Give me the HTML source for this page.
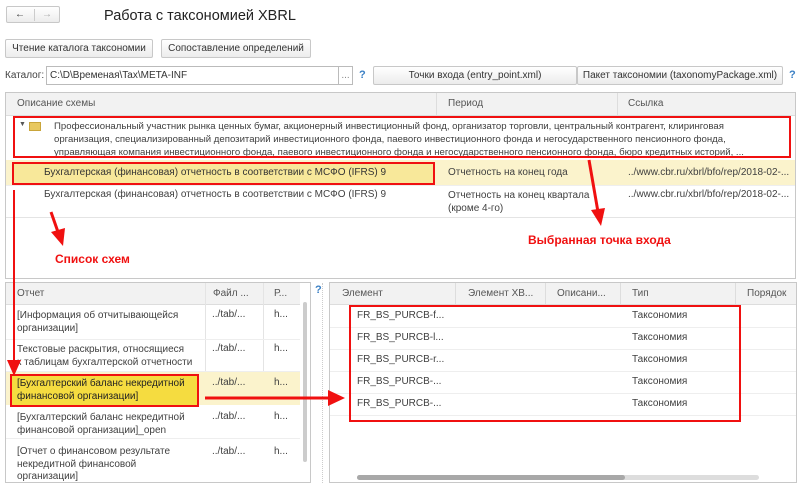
<!DOCTYPE html>
<html><head><meta charset="utf-8"><style>
*{box-sizing:border-box;margin:0;padding:0}
body{width:800px;height:488px;background:#fff;font-family:"Liberation Sans",sans-serif;font-size:10px;color:#404040;position:relative;overflow:hidden}
.a{position:absolute}
.btn{position:absolute;border:1px solid #c8c8c8;border-radius:2px;background:linear-gradient(#fff,#ececec);text-align:center;color:#333;font-size:10px;line-height:17px;white-space:nowrap;overflow:hidden}
.hd{background:#f2f2f2;color:#555}
.red{border:2px solid #f01010}
.q{color:#3a7fc4;font-weight:bold;font-size:11px}
.t{position:absolute;white-space:nowrap}
</style></head><body>
<div class="btn" style="left:6px;top:6px;width:54px;height:17px;line-height:15px"><span style="position:absolute;left:8px">&#8592;</span><span style="position:absolute;left:35px;color:#aaa">&#8594;</span><span style="position:absolute;left:27px;top:2px;height:12px;border-left:1px solid #ccc"></span></div>
<div class="t" style="left:104px;top:8px;font-size:14.5px;color:#222">Работа с таксономией XBRL</div>
<div class="btn" style="left:5px;top:39px;width:148px;height:19px">Чтение каталога таксономии</div>
<div class="btn" style="left:161px;top:39px;width:150px;height:19px">Сопоставление определений</div>
<div class="t" style="left:5px;top:70px">Каталог:</div>
<div class="a" style="left:46px;top:66px;width:293px;height:19px;border:1px solid #bbb;padding:3px 3px;color:#333;white-space:nowrap">C:\D\Временая\Tax\META-INF</div>
<div class="a" style="left:338px;top:66px;width:15px;height:19px;border:1px solid #bbb;text-align:center;color:#888;line-height:17px">...</div>
<div class="t q" style="left:359px;top:69px">?</div>
<div class="btn" style="left:373px;top:66px;width:204px;height:19px">Точки входа (entry_point.xml)</div>
<div class="btn" style="left:577px;top:66px;width:206px;height:19px">Пакет таксономии (taxonomyPackage.xml)</div>
<div class="t q" style="left:789px;top:69px">?</div>

<div class="a" style="left:5px;top:92px;width:791px;height:187px;border:1px solid #c8c8c8"></div>
<div class="a hd" style="left:6px;top:93px;width:789px;height:23px;border-bottom:1px solid #ddd"></div>
<div class="a" style="left:436px;top:93px;height:23px;border-left:1px solid #ddd"></div>
<div class="a" style="left:617px;top:93px;height:23px;border-left:1px solid #ddd"></div>
<div class="t" style="left:17px;top:98px;color:#555">Описание схемы</div>
<div class="t" style="left:448px;top:98px;color:#555">Период</div>
<div class="t" style="left:628px;top:98px;color:#555">Ссылка</div>
<div class="t" style="left:19px;top:121px;font-size:7px;color:#555">▼</div>
<div class="a" style="left:29px;top:122px;width:12px;height:9px;background:#e8c860;border:1px solid #c9a53a"></div>
<div class="t" style="left:54px;top:120px;line-height:13px;font-size:9.6px">Профессиональный участник рынка ценных бумаг, акционерный инвестиционный фонд, организатор торговли, центральный контрагент, клиринговая<br>организация, специализированный депозитарий инвестиционного фонда, паевого инвестиционного фонда и негосударственного пенсионного фонда,<br>управляющая компания инвестиционного фонда, паевого инвестиционного фонда и негосударственного пенсионного фонда, бюро кредитных историй, ...</div>
<div class="a red" style="left:13px;top:116px;width:778px;height:42px"></div>
<div class="a" style="left:6px;top:160px;width:789px;height:26px;background:#fbf3cc;border-bottom:1px solid #eee"></div>
<div class="a" style="left:14px;top:163px;width:420px;height:20px;background:#f8e89a"></div>
<div class="a red" style="left:12px;top:162px;width:423px;height:23px"></div>
<div class="t" style="left:44px;top:167px;color:#333">Бухгалтерская (финансовая) отчетность в соответствии с МСФО (IFRS) 9</div>
<div class="t" style="left:448px;top:167px">Отчетность на конец года</div>
<div class="t" style="left:628px;top:167px">../www.cbr.ru/xbrl/bfo/rep/2018-02-...</div>
<div class="t" style="left:44px;top:189px">Бухгалтерская (финансовая) отчетность в соответствии с МСФО (IFRS) 9</div>
<div class="t" style="left:448px;top:189px;line-height:13px">Отчетность на конец квартала<br>(кроме 4-го)</div>
<div class="t" style="left:628px;top:189px">../www.cbr.ru/xbrl/bfo/rep/2018-02-...</div>
<div class="a" style="left:6px;top:217px;width:789px;border-top:1px solid #e4e4e4"></div>

<div class="a" style="left:5px;top:282px;width:306px;height:201px;border:1px solid #c8c8c8"></div>
<div class="a hd" style="left:6px;top:283px;width:294px;height:22px;border-bottom:1px solid #ddd"></div>
<div class="a" style="left:205px;top:283px;height:122px;border-left:1px solid #e4e4e4"></div>
<div class="a" style="left:263px;top:283px;height:122px;border-left:1px solid #e4e4e4"></div>
<div class="t" style="left:17px;top:288px;color:#555">Отчет</div>
<div class="t" style="left:213px;top:288px;color:#555">Файл ...</div>
<div class="t" style="left:274px;top:288px;color:#555">Р...</div>
<div class="a" style="left:302px;top:288px;width:6px;height:190px"><div style="position:absolute;left:1px;top:14px;width:4px;height:160px;background:#ccc;border-radius:2px"></div></div>
<div class="a" style="left:6px;top:372px;width:294px;height:33px;background:#fbf3cc"></div>
<div class="a" style="left:10px;top:374px;width:188px;height:32px;background:#f5dc40"></div>
<div class="a red" style="left:10px;top:374px;width:189px;height:33px"></div>
<div class="t" style="left:17px;top:309px;line-height:13px">[Информация об отчитывающейся<br>организации]</div>
<div class="t" style="left:17px;top:343px;line-height:13px">Текстовые раскрытия, относящиеся<br>к таблицам бухгалтерской отчетности</div>
<div class="t" style="left:17px;top:377px;line-height:13px;color:#222">[Бухгалтерский баланс некредитной<br>финансовой организации]</div>
<div class="t" style="left:17px;top:411px;line-height:13px">[Бухгалтерский баланс некредитной<br>финансовой организации]_open</div>
<div class="t" style="left:17px;top:446px;line-height:12.5px">[Отчет о финансовом результате<br>некредитной финансовой<br>организации]</div>
<div class="t" style="left:212px;top:309px">../tab/...</div><div class="t" style="left:274px;top:309px">h...</div>
<div class="t" style="left:212px;top:343px">../tab/...</div><div class="t" style="left:274px;top:343px">h...</div>
<div class="t" style="left:212px;top:377px">../tab/...</div><div class="t" style="left:274px;top:377px">h...</div>
<div class="t" style="left:212px;top:411px">../tab/...</div><div class="t" style="left:274px;top:411px">h...</div>
<div class="t" style="left:212px;top:446px">../tab/...</div><div class="t" style="left:274px;top:446px">h...</div>
<div class="a" style="left:6px;top:339px;width:294px;border-top:1px solid #eee"></div>
<div class="a" style="left:6px;top:371px;width:294px;border-top:1px solid #eee"></div>
<div class="a" style="left:6px;top:438px;width:294px;border-top:1px solid #eee"></div>
<div class="t q" style="left:315px;top:284px">?</div>
<div class="a" style="left:322px;top:283px;height:200px;border-left:1px dotted #ccc"></div>

<div class="a" style="left:329px;top:282px;width:468px;height:201px;border:1px solid #c8c8c8"></div>
<div class="a hd" style="left:330px;top:283px;width:466px;height:22px;border-bottom:1px solid #ddd"></div>
<div class="a" style="left:455px;top:283px;height:22px;border-left:1px solid #ddd"></div>
<div class="a" style="left:545px;top:283px;height:22px;border-left:1px solid #ddd"></div>
<div class="a" style="left:620px;top:283px;height:22px;border-left:1px solid #ddd"></div>
<div class="a" style="left:735px;top:283px;height:22px;border-left:1px solid #ddd"></div>
<div class="t" style="left:342px;top:288px;color:#555">Элемент</div>
<div class="t" style="left:468px;top:288px;color:#555">Элемент ХВ...</div>
<div class="t" style="left:557px;top:288px;color:#555">Описани...</div>
<div class="t" style="left:632px;top:288px;color:#555">Тип</div>
<div class="t" style="left:747px;top:288px;color:#555">Порядок</div>
<div class="t" style="left:357px;top:310px">FR_BS_PURCB-f...</div><div class="t" style="left:632px;top:310px">Таксономия</div>
<div class="t" style="left:357px;top:332px">FR_BS_PURCB-l...</div><div class="t" style="left:632px;top:332px">Таксономия</div>
<div class="t" style="left:357px;top:354px">FR_BS_PURCB-r...</div><div class="t" style="left:632px;top:354px">Таксономия</div>
<div class="t" style="left:357px;top:376px">FR_BS_PURCB-...</div><div class="t" style="left:632px;top:376px">Таксономия</div>
<div class="t" style="left:357px;top:398px">FR_BS_PURCB-...</div><div class="t" style="left:632px;top:398px">Таксономия</div>
<div class="a" style="left:330px;top:327px;width:466px;border-top:1px solid #eee"></div>
<div class="a" style="left:330px;top:349px;width:466px;border-top:1px solid #eee"></div>
<div class="a" style="left:330px;top:371px;width:466px;border-top:1px solid #eee"></div>
<div class="a" style="left:330px;top:393px;width:466px;border-top:1px solid #eee"></div>
<div class="a" style="left:330px;top:415px;width:466px;border-top:1px solid #eee"></div>
<div class="a red" style="left:349px;top:305px;width:392px;height:117px"></div>
<div class="a" style="left:357px;top:475px;width:402px;height:5px;background:#ddd;border-radius:3px"><div style="width:268px;height:5px;background:#a8a8a8;border-radius:3px"></div></div>

<svg class="a" style="left:0;top:0" width="800" height="488">
<g stroke="#f01010" stroke-width="3" fill="#f01010">
<line x1="589" y1="160" x2="598" y2="212"/><polygon points="591,210 605,208 601,226" stroke="none"/>
<line x1="51" y1="212" x2="58" y2="232"/><polygon points="51,232 65,228 63,246" stroke="none"/>
<line x1="14" y1="190" x2="14" y2="362" stroke-width="2"/><polygon points="7,360 21,360 14,376" stroke="none"/>
<line x1="205" y1="398" x2="330" y2="398"/><polygon points="328,390 328,406 345,398" stroke="none"/>
</g></svg>
<div class="t" style="left:528px;top:233px;color:#f01010;font-weight:bold;font-size:12px">Выбранная точка входа</div>
<div class="t" style="left:55px;top:252px;color:#f01010;font-weight:bold;font-size:12px">Список схем</div>
</body></html>
